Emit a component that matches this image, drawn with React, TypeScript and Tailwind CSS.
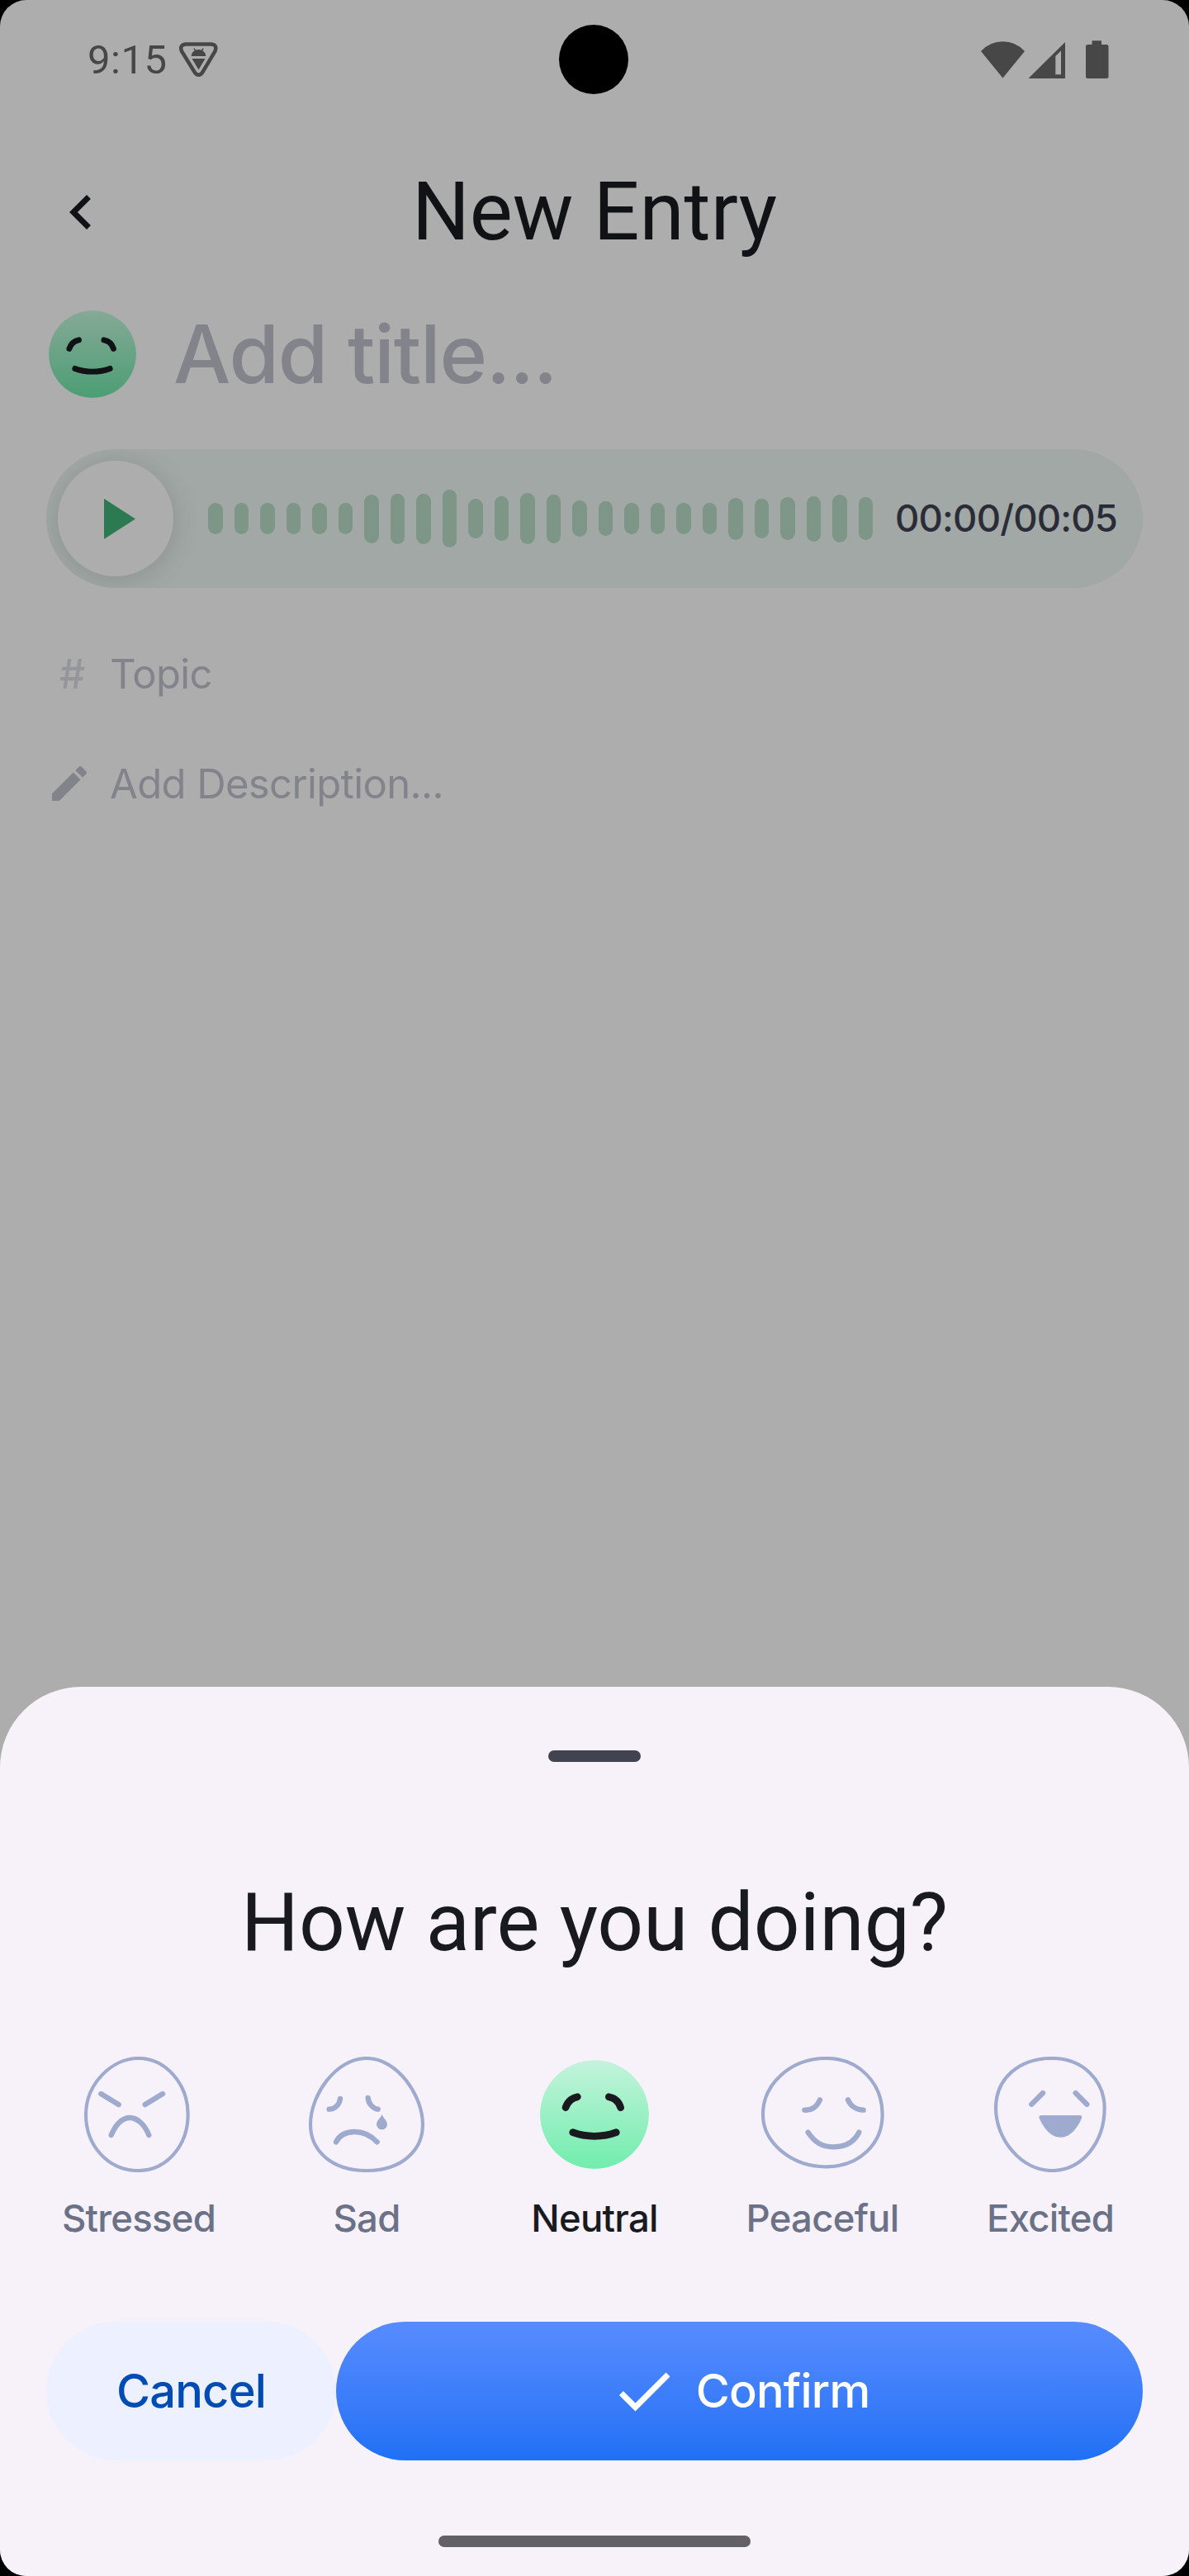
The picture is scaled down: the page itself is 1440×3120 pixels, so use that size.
import type { ReactNode } from "react";

const BAR_HEIGHTS = [
  37.5, 37.5, 37.5, 37.5, 37.5, 37.5, 59, 61, 61, 70, 48, 54, 62, 59, 44, 42, 37.5, 37.5, 37.5, 37.5, 51, 48, 52, 55,
  58, 52,
];

function NeutralFeatures() {
  return (
    <g fill="none" stroke="currentColor" strokeWidth="26" strokeLinecap="round">
      <path d="M255 278C262 257 278 243 298 239" />
      <path d="M412 239C434 243 449 258 455 278" />
      <path d="M281 368C330 386.500 390 386.500 439 368" />
    </g>
  );
}

function Outline({ viewBox, outline, children }: { viewBox: string; outline: string; children: ReactNode }) {
  return (
    <svg viewBox={viewBox} className="h-[140px] w-[180px] text-[#9eabce]" fill="none" stroke="currentColor" strokeWidth="19" strokeLinecap="round">
      <path d={outline} strokeWidth="12.500" />
      {children}
    </svg>
  );
}

const stressed = (
  <Outline viewBox="54 93 540 420" outline="M323 99C420 99 503 190 503 303C503 416 425 507 323 507C212 507 132 416 132 303C132 192 226 99 323 99Z">
    <path d="M187 228L251 267M347 267L411 228M224 378C243 334 266 315 292 315C318 315 345 338 361 378" />
  </Outline>
);

const sad = (
  <Outline viewBox="882 93 540 420" outline="M1152 99C1264 99 1356 235 1356 340C1356 437 1275 507 1152 507C1028 507 948 437 948 340C948 232 1040 99 1152 99Z">
    <path d="M1016 284C1036 284 1054 267 1056 246M1157 243C1158 262 1175 282 1193 284M1041 403C1055 375 1080 366 1108 366C1140 366 1168 380 1190 403" />
    <path d="M1208 303C1212 315 1227 326 1227 339A19.500 19 0 0 1 1188 339C1188 326 1203 315 1208 303Z" fill="currentColor" stroke="none" />
  </Outline>
);

const neutral = (
  <svg viewBox="90 93 540 420" className="h-[140px] w-[180px] text-[#191a1f]">
    <defs>
      <linearGradient id="neutral" x1="0" y1="0" x2="0" y2="1">
        <stop offset="0" stopColor="#c4f3dc" />
        <stop offset="1" stopColor="#71edad" />
      </linearGradient>
    </defs>
    <circle cx="360" cy="303" r="197.500" fill="url(#neutral)" />
    <NeutralFeatures />
  </svg>
);

const peaceful = (
  <Outline viewBox="918 93 540 420" outline="M1202 99C1322 99 1406 190 1406 303C1406 410 1322 493 1202 493C1075 493 972 405 972 303C972 190 1075 99 1202 99Z">
    <path d="M1123 287C1148 289 1168 275 1179 250M1281 250C1291 272 1312 287 1337 287M1136 368C1160 403 1185 421 1228 421C1270 421 1303 405 1321 368" />
  </Outline>
);

const excited = (
  <Outline viewBox="366 93 540 420" outline="M642 99C755 99 833 180 833 280C833 400 755 507 642 507C530 507 438 392 438 280C438 170 525 99 642 99Z">
    <path d="M568 266L609 225M728 225L769 266" />
    <path d="M604 306H742Q753 306 750 317C735 350 710 386 673 386C635 386 612 350 596 317Q593 306 604 306Z" fill="currentColor" stroke="none" />
  </Outline>
);

const MOODS = [
  { label: "Stressed", face: stressed },
  { label: "Sad", face: sad },
  { label: "Neutral", face: neutral, active: true },
  { label: "Peaceful", face: peaceful },
  { label: "Excited", face: excited },
];

function StatusBar() {
  return (
    <div className="flex h-36 items-center pl-[106px] text-[#474747]">
      <span className="w-[97px] shrink-0 font-[Roboto] text-[49px] leading-none tracking-[0.01em] whitespace-nowrap">9:15</span>
      <svg viewBox="217 52 48 44" className="ml-3.5 h-11 w-12 shrink-0" fill="currentColor">
        <path d="M225.500 55.500H255.500Q263.500 56 260.500 64L245 90Q240.500 95.500 236 90L220 64Q217 56 225.500 55.500Z" fill="none" stroke="currentColor" strokeWidth="4.500" />
        <path d="M231.700 70A8.800 8 0 0 1 249.300 70ZM232.500 73H248.500L240.500 86.500Z" />
        <path d="M235 60.500L237 64.500M246 60.500L244 64.500" stroke="currentColor" strokeWidth="1.500" />
      </svg>
      <svg viewBox="1186 48 160 48" className="ml-[921px] h-12 w-40 shrink-0" fill="currentColor">
        <path d="M1188 62Q1199 50.300 1214.500 50.300T1241 62L1214.500 94.500Z" />
        <path fillRule="evenodd" d="M1245.500 95L1290 51V95ZM1278.300 68V90.300H1285V61.500Z" />
        <path d="M1322.500 54V49.300H1334V54H1340Q1342.500 54 1342.500 56.500V92.500Q1342.500 95 1340 95H1317.500Q1315 95 1315 92.500V56.500Q1315 54 1317.500 54Z" />
      </svg>
    </div>
  );
}

export default function App() {
  return (
    <div className="h-[3120px] w-[1440px] bg-black">
      <div className="relative flex h-full w-full flex-col overflow-hidden rounded-[32px] bg-[#adadad] font-[Inter]">
        <StatusBar />
        <div className="absolute top-[30px] left-[677px] size-[84px] rounded-full bg-black" />

        <header className="mt-[71px] flex h-[84px] items-center px-14 text-[#111215]">
          <svg viewBox="0 0 24 24" className="size-[84px]" fill="currentColor">
            <path d="M15.410 16.590L10.830 12l4.580-4.590L14 6l-6 6 6 6z" />
          </svg>
          <h1 className="flex-1 pr-[84px] text-center font-[Roboto] text-[98px] leading-none">New Entry</h1>
        </header>

        <div className="mt-[70px] flex h-[120px] items-center pl-[59px] text-[#83838c]">
          <svg viewBox="162 105 396 396" className="size-[106px] text-[#111215]">
            <defs>
              <linearGradient id="neutralDim" x1="0" y1="0" x2="0" y2="1">
                <stop offset="0" stopColor="#86a997" />
                <stop offset="1" stopColor="#4b9e74" />
              </linearGradient>
            </defs>
            <circle cx="360" cy="303" r="197.500" fill="url(#neutralDim)" />
            <NeutralFeatures />
          </svg>
          <span className="ml-[45px] text-[98px] leading-none font-medium tracking-[-0.0125em]">Add title...</span>
        </div>

        <div className="mx-14 mt-[55px] flex h-[168px] shrink-0 items-center overflow-hidden rounded-full bg-[#a1a8a5] pl-3.5">
          <div className="flex size-[140px] shrink-0 items-center justify-center rounded-full bg-[#adadad] shadow-[0_4px_28px_4px_rgba(70,74,72,0.18)]">
            <svg viewBox="0 0 38 49" className="ml-2.5 h-[49px] w-[38px] text-[#2c7a51]" fill="currentColor">
              <path d="M0 0L38 24.500L0 49Z" />
            </svg>
          </div>
          <div className="ml-[42px] flex h-full shrink-0 items-center gap-3.5">
            {BAR_HEIGHTS.map((height, i) => (
              <div key={i} className="w-[17.5px] rounded-full bg-[#7d9688]" style={{ height }} />
            ))}
          </div>
          <span className="ml-[27px] text-[45.5px] leading-none font-medium tracking-[-0.018em] text-[#2a2d37]">00:00/00:05</span>
        </div>

        <div className="mt-[69px] flex h-[70px] items-center pl-14 text-[49px] leading-none text-[#83838c]">
          <span className="w-[77px] pl-4 font-medium text-[#95969c]">#</span>
          <span className="tracking-[-0.0125em]">Topic</span>
        </div>
        <div className="mt-[63px] flex h-[70px] items-center pl-14 text-[49px] leading-none text-[#83838c]">
          <svg viewBox="0 0 24 24" className="size-14" fill="currentColor">
            <path d="M3 17.250V21h3.750L17.810 9.940l-3.750-3.750L3 17.250zM20.710 7.040c.390-.390.390-1.020 0-1.410l-2.340-2.340c-.390-.390-1.020-.390-1.410 0l-1.830 1.830 3.750 3.750 1.830-1.830z" />
          </svg>
          <span className="ml-[21px] tracking-[-0.0125em]">Add Description...</span>
        </div>

        <section className="mt-auto flex h-[1077px] shrink-0 flex-col items-center rounded-t-[98px] bg-[#f7f2fa]">
          <div className="mt-[77px] h-3.5 w-28 rounded-full bg-[#414350]" />
          <h2 className="mt-[145px] h-[100px] font-[Roboto] text-[98px] leading-[100px] text-[#191a1f]">How are you doing?</h2>
          <div className="mt-28 flex w-full justify-between px-14">
            {MOODS.map(({ label, face, active }) => (
              <div key={label} className="flex w-56 flex-col items-center">
                {face}
                <span className={`mt-7 h-14 text-[45.5px] leading-[56px] font-medium tracking-[-0.017em] ${active ? "text-[#191a1f]" : "text-[#6b7186]"}`}>{label}</span>
              </div>
            ))}
          </div>
          <div className="mt-[97px] flex w-full px-14 text-[56px] leading-none font-medium tracking-[-0.014em]">
            <button className="h-[168px] w-[351px] rounded-full bg-[#edf0ff] text-[#004bb4]">Cancel</button>
            <button className="flex h-[168px] flex-1 items-center justify-center gap-[21px] rounded-full bg-linear-to-b from-[#578cff] to-[#1f70f5] text-white">
              <svg viewBox="0 0 24 24" className="size-[84px]" fill="currentColor">
                <path d="M9 16.170L4.830 12l-1.420 1.410L9 19 21 7l-1.410-1.410z" />
              </svg>
              Confirm
            </button>
          </div>
          <div className="mt-[91px] h-3.5 w-[378px] rounded-full bg-[#636165]" />
        </section>
      </div>
    </div>
  );
}
